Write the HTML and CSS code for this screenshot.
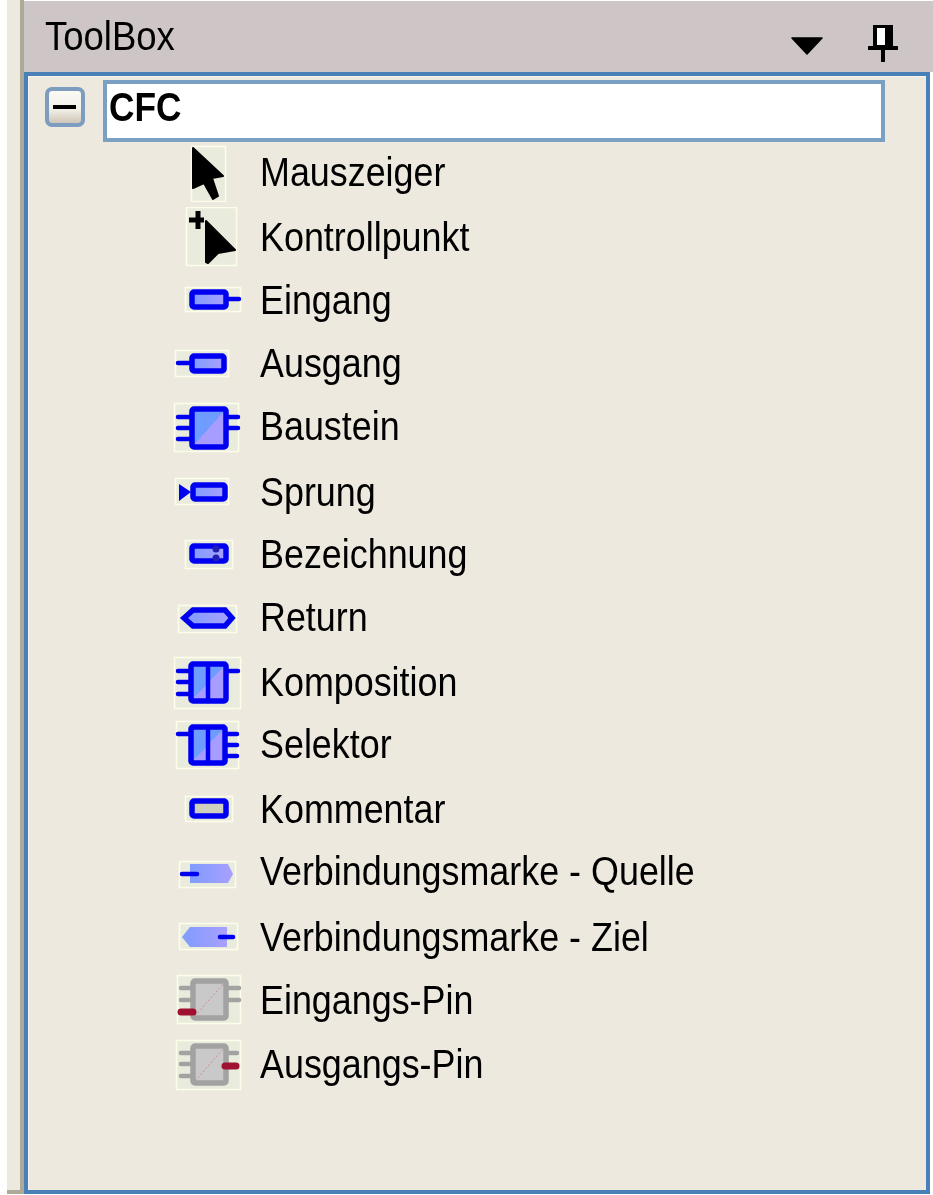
FILE: index.html
```html
<!DOCTYPE html>
<html lang="de">
<head>
    <meta charset="UTF-8">
    <title>ToolBox</title>
    <link rel="stylesheet" href="styles.css">
</head>
<body>

<svg class="defs" width="0" height="0">
    <defs>
        <linearGradient id="split" x1="0" y1="0" x2="1" y2="1">
            <stop offset="0.5" stop-color="#6f9cff"/>
            <stop offset="0.5" stop-color="#a79cff"/>
        </linearGradient>
        <linearGradient id="bar" x1="0" y1="0" x2="1" y2="0">
            <stop offset="0" stop-color="#7f9cff"/>
            <stop offset="1" stop-color="#a8a0ff"/>
        </linearGradient>
        <linearGradient id="knob" x1="0" y1="0" x2="0" y2="1">
            <stop offset="0" stop-color="#fbfaf6"/>
            <stop offset="0.55" stop-color="#f4f1ea"/>
            <stop offset="1" stop-color="#c9c0ae"/>
        </linearGradient>
    </defs>
</svg>

<div class="window">
    <div class="rail"></div>
    <div class="panel">
        <div class="title-bar">
            <span class="title">ToolBox</span>
            <svg class="arrow-btn" width="32" height="18" viewBox="0 0 32 18">
                <path d="M1 1H31L16 17Z" fill="#000" stroke="#000" stroke-width="1.5" stroke-linejoin="round"/>
            </svg>
            <svg class="pin-btn" width="30" height="38" viewBox="0 0 30 38">
                <path d="M5 1H25V23H5Z" fill="#000"/>
                <path d="M9 4H17V21H9Z" fill="#fff"/>
                <path d="M1 24H29M15 24V37" stroke="#000" stroke-width="4" stroke-linecap="round"/>
            </svg>
        </div>
        <div class="box">
            <div class="group-head">
                <svg class="expander" width="40" height="40" viewBox="0 0 40 40">
                    <rect x="2" y="2" width="36" height="36" rx="5" fill="url(#knob)" stroke="#7c9cc0" stroke-width="4"/>
                    <path d="M8 20H31" stroke="#000" stroke-width="4"/>
                </svg>
                <div class="group-name"><span>CFC</span></div>
            </div>
            <ul class="items">
                <li>
                    <svg class="ico" viewBox="0 0 70 60">
                        <rect class="ground" x="19.5" y="4.5" width="34" height="55"/>
                        <path class="cursor" d="M21 6L51 34L40 36L46 54L41 57L32 41L21 46Z"/>
                    </svg>
                    <span class="label">Mauszeiger</span>
                </li>
                <li>
                    <svg class="ico" viewBox="0 0 70 60">
                        <rect class="ground" x="14.5" y="0.5" width="50" height="58"/>
                        <path d="M17 13H32M26 4V22" stroke="#000" stroke-width="5"/>
                        <path class="cursor" d="M34 14L63 43L46 46L36 56L34 55Z"/>
                    </svg>
                    <span class="label">Kontrollpunkt</span>
                </li>
                <li>
                    <svg class="ico" viewBox="0 0 70 60">
                        <rect class="ground" x="13.5" y="17.5" width="55" height="24"/>
                        <rect class="blk" x="20" y="22" width="34" height="15" rx="2"/>
                        <path class="stub" d="M56 29H67"/>
                    </svg>
                    <span class="label">Eingang</span>
                </li>
                <li>
                    <svg class="ico" viewBox="0 0 70 60">
                        <rect class="ground" x="3.5" y="17.5" width="53" height="26"/>
                        <rect class="blk" x="20" y="23" width="32" height="15" rx="2"/>
                        <path class="stub" d="M6 30H18"/>
                    </svg>
                    <span class="label">Ausgang</span>
                </li>
                <li>
                    <svg class="ico" viewBox="0 0 70 60">
                        <rect class="ground" x="2.5" y="7.5" width="64" height="48"/>
                        <rect class="blk split" x="20" y="13" width="34" height="38" rx="2"/>
                        <path class="stub" d="M6 21H18M6 32H18M6 43H18M56 21H66M56 32H66"/>
                    </svg>
                    <span class="label">Baustein</span>
                </li>
                <li>
                    <svg class="ico" viewBox="0 0 70 60">
                        <rect class="ground" x="3.5" y="16.5" width="53" height="26"/>
                        <rect class="blk" x="21" y="23" width="32" height="14" rx="2"/>
                        <path d="M7 22L19 30L7 39Z" fill="#0000f0"/>
                    </svg>
                    <span class="label">Sprung</span>
                </li>
                <li>
                    <svg class="ico" viewBox="0 0 70 60">
                        <rect class="ground" x="13.5" y="16.5" width="47" height="28"/>
                        <rect class="blk" x="20" y="22" width="34" height="15" rx="2"/>
                        <circle cx="44" cy="25" r="3.5" fill="#2020b0"/>
                        <circle cx="44" cy="34" r="3.5" fill="#2020b0"/>
                    </svg>
                    <span class="label">Bezeichnung</span>
                </li>
                <li>
                    <svg class="ico" viewBox="0 0 70 60">
                        <rect class="ground" x="6.5" y="18.5" width="58" height="27"/>
                        <path class="blk" d="M12 31L21 23H53L60 31L53 39H21Z"/>
                    </svg>
                    <span class="label">Return</span>
                </li>
                <li>
                    <svg class="ico" viewBox="0 0 70 60">
                        <rect class="ground" x="2.5" y="5.5" width="66" height="51"/>
                        <rect class="blk split" x="19" y="12" width="35" height="37" rx="2"/>
                        <path class="stub" d="M36 12V49M6 19H17M6 30H17M6 42H17M56 19H66"/>
                    </svg>
                    <span class="label">Komposition</span>
                </li>
                <li>
                    <svg class="ico" viewBox="0 0 70 60">
                        <rect class="ground" x="4.5" y="7.5" width="62" height="47"/>
                        <rect class="blk split" x="19" y="13" width="34" height="36" rx="2"/>
                        <path class="stub" d="M36 13V49M6 20H17M55 20H65M55 31H65M55 42H65"/>
                    </svg>
                    <span class="label">Selektor</span>
                </li>
                <li>
                    <svg class="ico" viewBox="0 0 70 60">
                        <rect class="ground" x="13.5" y="17.5" width="47" height="25"/>
                        <rect class="blk note" x="20" y="22" width="34" height="15" rx="2"/>
                    </svg>
                    <span class="label">Kommentar</span>
                </li>
                <li>
                    <svg class="ico" viewBox="0 0 70 60">
                        <rect class="ground" x="7.5" y="20.5" width="56" height="26"/>
                        <path d="M18 23H56L61 33L56 42H18Z" fill="url(#bar)"/>
                        <path class="stub" d="M10 33H25"/>
                    </svg>
                    <span class="label">Verbindungsmarke - Quelle</span>
                </li>
                <li>
                    <svg class="ico" viewBox="0 0 70 60">
                        <rect class="ground" x="7.5" y="16.5" width="58" height="26"/>
                        <path d="M10 30L18 20H55V40H18Z" fill="url(#bar)"/>
                        <path class="stub" d="M48 30H61"/>
                    </svg>
                    <span class="label">Verbindungsmarke - Ziel</span>
                </li>
                <li>
                    <svg class="ico" viewBox="0 0 70 60">
                        <rect class="ground" x="5.5" y="5.5" width="63" height="48"/>
                        <rect class="blk off" x="21" y="11" width="33" height="37" rx="2"/>
                        <path class="diag" d="M23 46L52 13"/>
                        <path class="stub off" d="M9 18H19M9 30H19M56 18H67M56 30H67"/>
                        <path class="red" d="M9 42H21"/>
                    </svg>
                    <span class="label">Eingangs-Pin</span>
                </li>
                <li>
                    <svg class="ico" viewBox="0 0 70 60">
                        <rect class="ground" x="4.5" y="6.5" width="64" height="49"/>
                        <rect class="blk off" x="21" y="12" width="33" height="37" rx="2"/>
                        <path class="diag" d="M23 47L52 14"/>
                        <path class="stub off" d="M9 19H19M9 30H19M9 42H19M56 19H65"/>
                        <path class="red" d="M53 32H64"/>
                    </svg>
                    <span class="label">Ausgangs-Pin</span>
                </li>
            </ul>
        </div>
    </div>
</div>

</body>
</html>
```

FILE: styles.css
```css
html, body {
    margin: 0;
    padding: 0;
    background: #fff;
}
body {
    font-family: "Liberation Sans", Arial, sans-serif;
    color: #000;
    overflow: hidden;
}
.defs {
    display: block;
    height: 0;
}
.window {
    display: flex;
    height: 1195px;
    padding-left: 7px;
    box-sizing: border-box;
}
.rail {
    width: 13px;
    height: 1190px;
    background: #ede9df;
    border-right: 4px solid #aeaa98;
    border-bottom: 4px solid #aeaa98;
}
.panel {
    flex: 1;
    display: flex;
    flex-direction: column;
    padding-top: 1px;
    min-width: 0;
}
.title-bar {
    height: 71px;
    display: flex;
    align-items: center;
    background: #cec6c6;
    padding-left: 21px;
    box-sizing: border-box;
}
.title {
    flex: 1;
    font-size: 41px;
    line-height: 71px;
    transform: scaleX(0.89);
    transform-origin: left center;
    filter: blur(0.3px);
}
.arrow-btn {
    margin: 19px 45px 0 0;
}
.pin-btn {
    margin: 13px 35px 0 0;
}
.box {
    height: 1122px;
    margin-right: 3px;
    box-sizing: border-box;
    border: 4px solid #4a80b8;
    background: #ede9df;
    box-shadow: inset 1px 1px 0 #f6f4ec;
    padding-top: 4px;
}
.group-head {
    display: flex;
    align-items: flex-start;
    padding-left: 17px;
}
.expander {
    margin: 7px 18px 0 0;
}
.group-name {
    width: 782px;
    height: 62px;
    box-sizing: border-box;
    border: 4px solid #7aa0c4;
    background: #fff;
    padding-left: 2px;
    font-size: 41px;
    font-weight: bold;
    line-height: 46px;
}
.group-name span {
    display: inline-block;
    transform: scaleX(0.86);
    transform-origin: left center;
    filter: blur(0.3px);
}
.items {
    list-style: none;
    margin: 0;
    padding: 0 0 0 144px;
    display: grid;
    grid-template-rows: 65px 63px 63px 63px 66px 62px 63px 65px 62px 65px 62px 66px 63px 64px 60px;
}
.items li {
    display: flex;
    align-items: flex-start;
    height: 60px;
}
.ico {
    width: 70px;
    height: 60px;
    flex: none;
    filter: blur(0.7px);
}
.label {
    margin-left: 18px;
    font-size: 41px;
    line-height: 60px;
    white-space: nowrap;
    transform: scaleX(0.875);
    transform-origin: left center;
    filter: blur(0.3px);
}
.ground {
    fill: #e9ecdc;
    stroke: #fdfdea;
    stroke-width: 1.5;
}
.cursor {
    fill: #000;
    stroke: #000;
    stroke-width: 2;
    stroke-linejoin: round;
}
.blk {
    fill: url(#bar);
    stroke: #0000f0;
    stroke-width: 5.5;
}
.split {
    fill: url(#split);
}
.note {
    fill: #cfcfc0;
}
.stub {
    fill: none;
    stroke: #0000f0;
    stroke-width: 4.5;
    stroke-linecap: round;
}
.blk.off {
    fill: #c9c9c9;
    stroke: #a2a2a2;
}
.stub.off {
    stroke: #a2a2a2;
}
.diag {
    stroke: #d08a90;
    stroke-width: 1;
    stroke-dasharray: 2 2;
}
.red {
    stroke: #a01030;
    stroke-width: 7;
    stroke-linecap: round;
}
```
